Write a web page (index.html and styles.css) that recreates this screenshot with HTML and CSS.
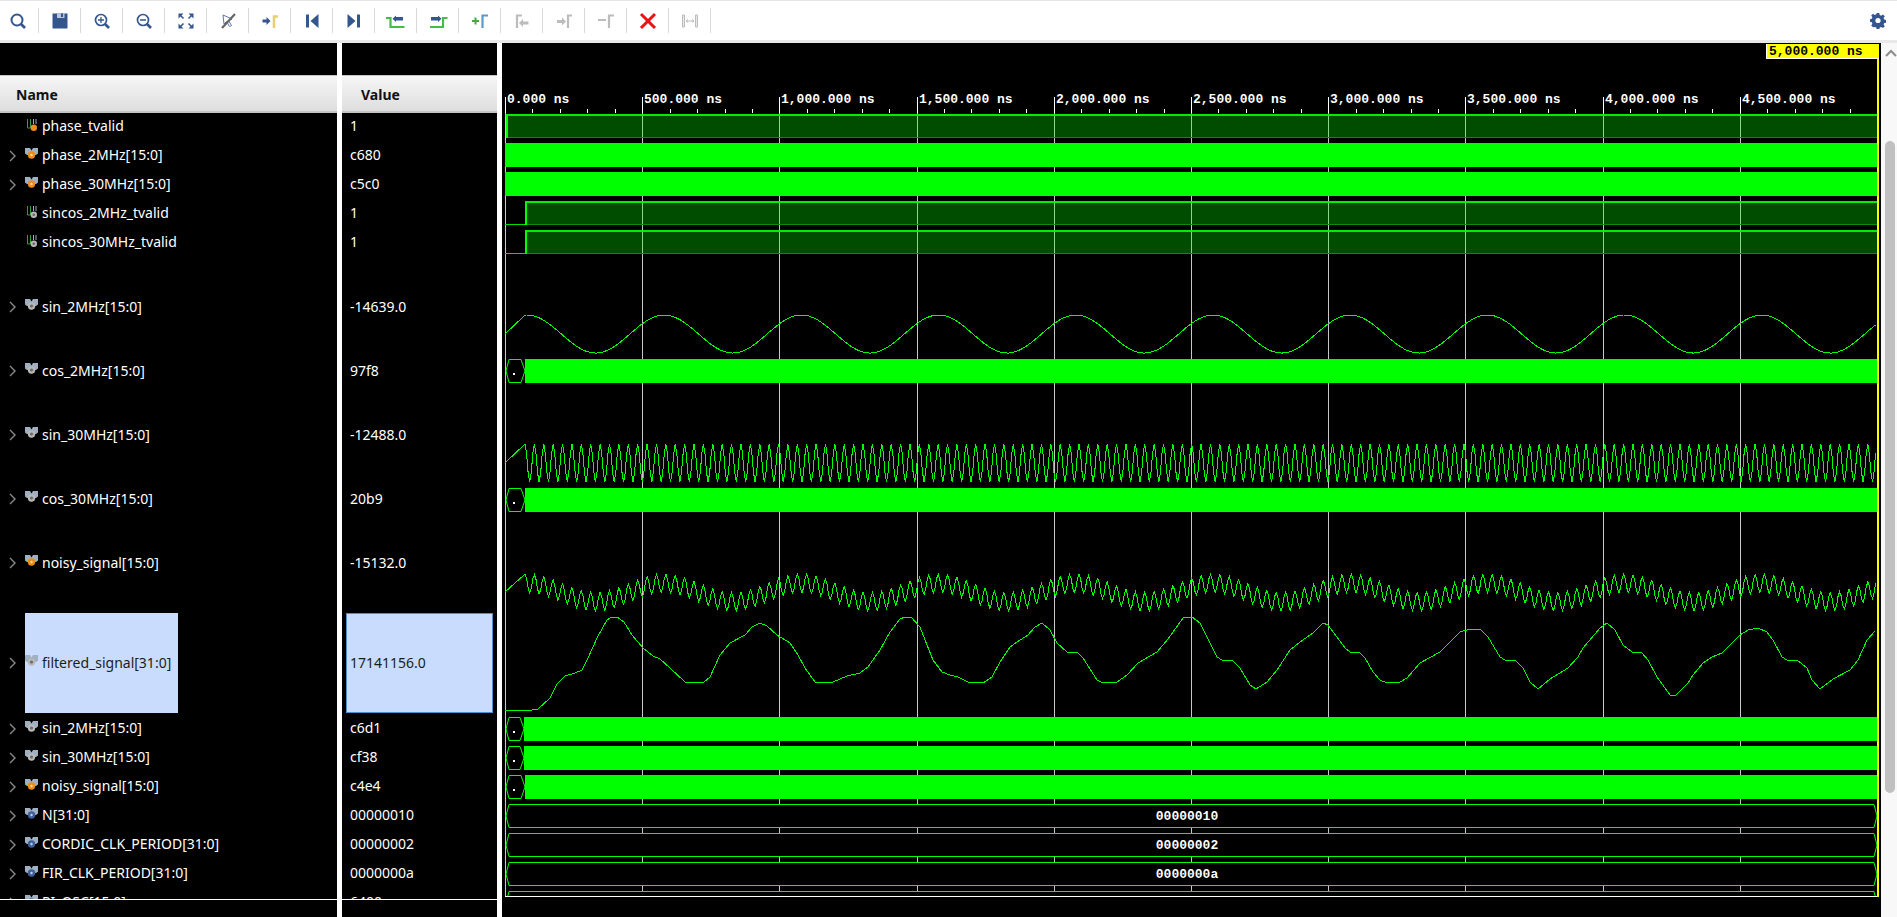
FILE: index.html
```html
<!DOCTYPE html>
<html lang="en">
<head>
    <meta charset="UTF-8">
    <meta name="viewport" content="width=device-width, initial-scale=1.0">
    <title>Waveform Viewer</title>
    <link rel="stylesheet" href="styles.css">
</head>
<body>
    <svg class="defs" width="0" height="0">
        <symbol id="chevron" viewBox="0 0 8 12"><path d="M1 1l5 5-5 5" fill="none" stroke="#8a8a8a" stroke-width="1.4"/></symbol>
        <symbol id="bus-v" viewBox="0 0 13 14"><path d="M0 1h5l1.500 2.500L8 1h5v5.500L11 8H2L0 6.500z" fill="#9fb0c2"/><circle cx="6.500" cy="8" r="3.700" fill="#ee8a1e"/><circle cx="6.500" cy="8" r="1.200" fill="#ffd9a0"/></symbol>
        <symbol id="bus-s" viewBox="0 0 13 14"><path d="M0 1h5l1.500 2.500L8 1h5v5.500L11 8H2L0 6.500z" fill="#9fb0c2"/><circle cx="6.500" cy="8" r="3.700" fill="#b8b8b8"/><circle cx="6.500" cy="8" r="1.600" fill="#6a6a6a"/></symbol>
        <symbol id="bus-c" viewBox="0 0 13 14"><path d="M0 1h5l1.500 2.500L8 1h5v5.500L11 8H2L0 6.500z" fill="#9fb0c2"/><circle cx="6.500" cy="8" r="3.700" fill="#3f5f9c"/><circle cx="6.500" cy="8" r="1.200" fill="#c3d0e6"/></symbol>
        <symbol id="bit-v" viewBox="0 0 13 14"><path d="M2.500 1v9h3V1" fill="none" stroke="#2ea043"/><path d="M8.500 1v5M11 1v5" stroke="#9fb0c2"/><circle cx="8.800" cy="9.800" r="3.200" fill="#ee8a1e"/></symbol>
        <symbol id="bit-s" viewBox="0 0 13 14"><path d="M2.500 1v9h3V1" fill="none" stroke="#2ea043"/><path d="M8.500 1v5M11 1v5" stroke="#9fb0c2"/><circle cx="8.800" cy="9.800" r="3.200" fill="#b8b8b8"/><circle cx="8.800" cy="9.800" r="1.300" fill="#666"/></symbol>
    </svg>

    <div id="toolbar">
        <button class="tool"><svg viewBox="0 0 22 22"><circle cx="10" cy="10" r="5.5" fill="none" stroke="#35558f" stroke-width="2"/><path d="M14 14l4 4" stroke="#35558f" stroke-width="2.6"/></svg></button>
        <button class="tool"><svg viewBox="0 0 22 22"><path d="M3.500 3.500h15v15h-15z" fill="#35558f"/><path d="M8 3.500h7.500v4.500H8z" fill="#b9c6dc"/><path d="M12 3.500h2v3.500h-2z" fill="#35558f"/></svg></button>
        <button class="tool"><svg viewBox="0 0 22 22"><circle cx="10" cy="10" r="5.500" fill="none" stroke="#35558f" stroke-width="1.700"/><path d="M14 14l4 4" stroke="#35558f" stroke-width="2.600"/><path d="M7 10h6M10 7v6" stroke="#35558f" stroke-width="1.300"/></svg></button>
        <button class="tool"><svg viewBox="0 0 22 22"><circle cx="10" cy="10" r="5.500" fill="none" stroke="#35558f" stroke-width="1.700"/><path d="M14 14l4 4" stroke="#35558f" stroke-width="2.600"/><path d="M7 10h6" stroke="#35558f" stroke-width="1.500"/></svg></button>
        <button class="tool"><svg viewBox="0 0 22 22"><path d="M3.500 3.500h5l-5 5zM18.500 3.500h-5l5 5zM3.500 18.500h5l-5-5zM18.500 18.500h-5l5-5z" fill="#35558f"/><path d="M5 5l3.500 3.500M17 5l-3.500 3.500M5 17l3.500-3.500M17 17l-3.500-3.500" stroke="#35558f" stroke-width="1.500"/></svg></button>
        <button class="tool"><svg viewBox="0 0 22 22"><path d="M6 5l9 4-3.500 1.500 3 5-2 1-3-5L7 14z" fill="#fff" stroke="#5a78a8"/><path d="M18 4L5 18" stroke="#666" stroke-width="2.200"/></svg></button>
        <button class="tool"><svg viewBox="0 0 22 22"><path d="M3.500 9.500h4V7l4 4-4 4v-2.500h-4z" fill="#35558f"/><path d="M15 18V6.500h4" fill="none" stroke="#e6cf72" stroke-width="2.600"/></svg></button>
        <button class="tool"><svg viewBox="0 0 22 22"><path d="M5 4.500h3v13H5z" fill="#35558f"/><path d="M17.500 4v14L9.500 11z" fill="#35558f"/></svg></button>
        <button class="tool"><svg viewBox="0 0 22 22"><path d="M14 4.500h3v13h-3z" fill="#35558f"/><path d="M4.500 4v14l8-7z" fill="#35558f"/></svg></button>
        <button class="tool"><svg viewBox="0 0 22 22"><path d="M11 7h7v3.500h-7V12L7.500 8.750 11 5.500z" fill="#35558f"/><path d="M0 8h4.500v9h14" transform="translate(1 0)" fill="none" stroke="#46bd46" stroke-width="2.200"/></svg></button>
        <button class="tool"><svg viewBox="0 0 22 22"><path d="M4 7h7V5.500l3.500 3.250L11 12v-1.500H4z" fill="#35558f"/><path d="M3 17h13V8h4.500" fill="none" stroke="#46bd46" stroke-width="2.200"/></svg></button>
        <button class="tool"><svg viewBox="0 0 22 22"><path d="M3 11h7M6.500 7.500v7" stroke="#46a846" stroke-width="2"/><path d="M13.500 18V5.500H19" fill="none" stroke="#5a9ac8" stroke-width="2.200"/></svg></button>
        <button class="tool"><svg viewBox="0 0 22 22"><path d="M6 18V5.500h5" fill="none" stroke="#bcbcbc" stroke-width="2.200"/><path d="M12 9v2.500h5.500v3H12V17l-4-4z" fill="#bcbcbc"/></svg></button>
        <button class="tool"><svg viewBox="0 0 22 22"><path d="M4 10h5V7.500l4 4-4 4V13H4z" fill="#bcbcbc"/><path d="M15 18V5.500h4" fill="none" stroke="#bcbcbc" stroke-width="2.200"/></svg></button>
        <button class="tool"><svg viewBox="0 0 22 22"><path d="M3 10h8" stroke="#bcbcbc" stroke-width="2"/><path d="M14 18V5.500h5" fill="none" stroke="#bcbcbc" stroke-width="2.200"/></svg></button>
        <button class="tool"><svg viewBox="0 0 22 22"><path d="M4 4l14 14M18 4L4 18" stroke="#ee1111" stroke-width="3"/></svg></button>
        <button class="tool"><svg viewBox="0 0 22 22"><path d="M3.500 5v12h2V5zM18.500 5v12h-2V5z" fill="#e8e8e8" stroke="#bcbcbc"/><path d="M7 11h8M7 11l2-1.500M7 11l2 1.500M15 11l-2-1.500M15 11l-2 1.500" stroke="#bcbcbc" fill="none"/></svg></button>
        <span class="tool-fill"></span>
        <svg class="gear" viewBox="0 0 16 16"><path d="M6.700 0h2.600l.4 2.100 1.500.6 1.800-1.200 1.800 1.800-1.200 1.800.6 1.500 2.100.4v2.600l-2.100.4-.6 1.500 1.200 1.800-1.800 1.800-1.800-1.200-1.500.6-.4 2.100H6.700l-.4-2.100-1.500-.6L3 14.300 1.200 12.500l1.200-1.800-.6-1.500L-.3 8.800V6.200l2.100-.4.6-1.500L1.200 2.500 3 .7l1.800 1.200 1.500-.6z" fill="#35558f"/><circle cx="8" cy="7.500" r="2.600" fill="#fff"/></svg>
    </div>

    <div id="main">
        <div class="col col-name">
            <div class="col-head">Name</div>
            <div class="list">
                <div class="row"><span class="exp"></span><span class="cell"><svg class="sig"><use href="#bit-v"/></svg>phase_tvalid</span></div>
                <div class="row"><svg class="exp"><use href="#chevron"/></svg><span class="cell"><svg class="sig"><use href="#bus-v"/></svg>phase_2MHz[15:0]</span></div>
                <div class="row"><svg class="exp"><use href="#chevron"/></svg><span class="cell"><svg class="sig"><use href="#bus-v"/></svg>phase_30MHz[15:0]</span></div>
                <div class="row"><span class="exp"></span><span class="cell"><svg class="sig"><use href="#bit-s"/></svg>sincos_2MHz_tvalid</span></div>
                <div class="row"><span class="exp"></span><span class="cell"><svg class="sig"><use href="#bit-s"/></svg>sincos_30MHz_tvalid</span></div>
                <div class="row tall after-gap"><svg class="exp"><use href="#chevron"/></svg><span class="cell"><svg class="sig"><use href="#bus-s"/></svg>sin_2MHz[15:0]</span></div>
                <div class="row tall"><svg class="exp"><use href="#chevron"/></svg><span class="cell"><svg class="sig"><use href="#bus-s"/></svg>cos_2MHz[15:0]</span></div>
                <div class="row tall"><svg class="exp"><use href="#chevron"/></svg><span class="cell"><svg class="sig"><use href="#bus-s"/></svg>sin_30MHz[15:0]</span></div>
                <div class="row tall"><svg class="exp"><use href="#chevron"/></svg><span class="cell"><svg class="sig"><use href="#bus-s"/></svg>cos_30MHz[15:0]</span></div>
                <div class="row tall"><svg class="exp"><use href="#chevron"/></svg><span class="cell"><svg class="sig"><use href="#bus-v"/></svg>noisy_signal[15:0]</span></div>
                <div class="row big after-gap"><svg class="exp"><use href="#chevron"/></svg><span class="cell selected"><svg class="sig"><use href="#bus-s"/></svg>filtered_signal[31:0]</span></div>
                <div class="row after-line"><svg class="exp"><use href="#chevron"/></svg><span class="cell"><svg class="sig"><use href="#bus-s"/></svg>sin_2MHz[15:0]</span></div>
                <div class="row"><svg class="exp"><use href="#chevron"/></svg><span class="cell"><svg class="sig"><use href="#bus-s"/></svg>sin_30MHz[15:0]</span></div>
                <div class="row"><svg class="exp"><use href="#chevron"/></svg><span class="cell"><svg class="sig"><use href="#bus-v"/></svg>noisy_signal[15:0]</span></div>
                <div class="row"><svg class="exp"><use href="#chevron"/></svg><span class="cell"><svg class="sig"><use href="#bus-c"/></svg>N[31:0]</span></div>
                <div class="row"><svg class="exp"><use href="#chevron"/></svg><span class="cell"><svg class="sig"><use href="#bus-c"/></svg>CORDIC_CLK_PERIOD[31:0]</span></div>
                <div class="row"><svg class="exp"><use href="#chevron"/></svg><span class="cell"><svg class="sig"><use href="#bus-c"/></svg>FIR_CLK_PERIOD[31:0]</span></div>
                <div class="row"><svg class="exp"><use href="#chevron"/></svg><span class="cell"><svg class="sig"><use href="#bus-c"/></svg>PI_OSC[15:0]</span></div>
            </div>
        </div>

        <div class="col col-value">
            <div class="col-head">Value</div>
            <div class="list">
                <div class="row">1</div>
                <div class="row">c680</div>
                <div class="row">c5c0</div>
                <div class="row">1</div>
                <div class="row">1</div>
                <div class="row tall after-gap">-14639.0</div>
                <div class="row tall">97f8</div>
                <div class="row tall">-12488.0</div>
                <div class="row tall">20b9</div>
                <div class="row tall">-15132.0</div>
                <div class="row big after-gap"><span class="value-selected">17141156.0</span></div>
                <div class="row after-line">c6d1</div>
                <div class="row">cf38</div>
                <div class="row">c4e4</div>
                <div class="row">00000010</div>
                <div class="row">00000002</div>
                <div class="row">0000000a</div>
                <div class="row">6400</div>
            </div>
        </div>

        <svg id="wave" viewBox="502 43 1379 874" width="1379" height="874"></svg>

        <div id="scroll">
            <svg class="scroll-up" viewBox="0 0 12 8"><path d="M1 7l5-5 5 5" fill="none" stroke="#8c8c8c" stroke-width="2"/></svg>
            <div class="thumb"></div>
        </div>
    </div>

    <script src="waves.js"></script>
</body>
</html>
```

FILE: styles.css
```css
body {
    font-family: "Noto Sans", Arial, sans-serif;
    font-size: 14px;
    background-color: #000;
    margin: 0;
    padding: 0;
    overflow: hidden;
}

.defs {
    position: absolute;
}

#toolbar {
    display: flex;
    align-items: center;
    height: 39px;
    background-color: #fff;
    border-top: 1px solid #e4e4e4;
    border-bottom: 3px solid #e8e8e8;
}

.tool {
    display: flex;
    align-items: center;
    justify-content: center;
    width: 42px;
    height: 25px;
    padding: 0;
    background: none;
    border: none;
    border-right: 1px solid #d8d8d8;
}

.tool:first-child {
    width: 39px;
    padding-right: 2px;
}

.tool svg {
    width: 22px;
    height: 22px;
}

.tool-fill {
    flex: 1;
}

.gear {
    width: 16px;
    height: 16px;
    margin-right: 11px;
}

#main {
    display: flex;
    height: 874px;
}

.col {
    flex: none;
    padding-top: 32px;
    border-right: 5px solid #fff;
}

.col-name {
    width: 337px;
}

.col-value {
    width: 155px;
}

.col-head {
    height: 35px;
    line-height: 37px;
    font-weight: bold;
    color: #111;
    background: linear-gradient(#f6f6f6, #dedede);
    border-top: 1px solid #c4c4c4;
    border-bottom: 1px solid #c4c4c4;
    box-shadow: 0 1px 0 #c4c4c4;
    padding-left: 16px;
}

.col-value .col-head {
    padding-left: 19px;
}

.list {
    height: 787px;
    overflow: hidden;
    border-bottom: 1px solid #fff;
    color: #fff;
}

.row {
    display: flex;
    align-items: center;
    height: 29px;
    white-space: nowrap;
    box-sizing: border-box;
}

.col-name .row {
    padding-left: 9px;
}

.col-value .row {
    padding-left: 8px;
    padding-bottom: 2px;
}

.row.tall {
    height: 64px;
}

.row.big {
    height: 100px;
}

.row.after-gap {
    margin-top: 18px;
}

.row.after-line {
    margin-top: 1px;
}

.exp {
    flex: none;
    width: 8px;
    height: 12px;
    margin-right: 8px;
}

span.exp {
    display: block;
}

.cell {
    display: flex;
    align-items: center;
    align-self: stretch;
    padding-right: 7px;
    padding-bottom: 2px;
    box-sizing: border-box;
}

.cell.selected,
.value-selected {
    background-color: #c9dcfd;
    color: #1c1c1c;
}

.sig {
    flex: none;
    width: 13px;
    height: 14px;
    margin: -2px 4px 0 0;
}

.col-value .row.big {
    padding: 0 4px;
}

.value-selected {
    display: flex;
    align-items: center;
    flex: 1;
    align-self: stretch;
    padding-left: 3px;
    padding-bottom: 2px;
    border: 1px solid #4a90d0;
}

#wave {
    display: block;
    flex: none;
    background-color: #000;
}

#scroll {
    flex: 1;
    background-color: #f8f8f8;
    padding: 6px 0 0 4px;
}

.scroll-up {
    display: block;
    width: 12px;
    height: 8px;
}

.thumb {
    width: 10px;
    height: 652px;
    margin-top: 84px;
    background-color: #c0c0c0;
    border-radius: 5px;
}
```

FILE: waves.js
```js
// Draws the waveform pane, all coordinates are page pixels
const X0 = 505, XEND = 1877, BOTTOM = 896, TIME_STEP = 137.2, FAST_PERIOD = 9.39;
const GREEN = "#00ff00";
const RULER_FONT = 'font-family="Liberation Mono" font-weight="bold" font-size="13"';

// traced from the filtered output, [x, y]
const FILTERED = [[505,710],[532,710],[538,709],[550,698],[557,684],[565,676],[575,673],[582,670],[588,658],[597,638],[607,620],[612,617],[617,617],[624,622],[632,635],[643,648],[653,656],[660,659],[670,668],[685,682],[697,682],[703,683],[710,677],[720,655],[730,643],[745,635],[752,627],[760,623],[767,626],[777,635],[790,643],[798,655],[805,668],[815,682],[822,683],[833,682],[847,676],[860,673],[868,667],[880,650],[890,632],[900,619],[905,617],[911,617],[920,627],[925,640],[933,660],[942,672],[950,675],[958,677],[968,682],[983,683],[992,677],[1000,662],[1010,647],[1017,642],[1028,635],[1035,627],[1042,623],[1050,630],[1057,643],[1067,652],[1078,653],[1083,658],[1097,680],[1103,683],[1117,682],[1127,675],[1138,663],[1157,652],[1168,639],[1183,618],[1192,617],[1200,623],[1217,657],[1222,660],[1232,660],[1240,668],[1250,685],[1256,689],[1267,682],[1277,670],[1290,650],[1300,642],[1313,633],[1323,623],[1328,625],[1337,637],[1345,648],[1350,652],[1360,653],[1365,658],[1373,672],[1380,680],[1387,683],[1400,682],[1407,678],[1420,663],[1440,652],[1460,632],[1470,629],[1480,629],[1488,637],[1500,657],[1505,660],[1515,660],[1523,668],[1530,682],[1538,689],[1550,679],[1568,668],[1578,657],[1583,648],[1600,628],[1607,623],[1615,630],[1623,645],[1632,652],[1642,653],[1648,660],[1657,677],[1670,695],[1676,695],[1688,683],[1693,675],[1703,663],[1712,657],[1722,653],[1740,635],[1748,630],[1758,628],[1767,632],[1773,640],[1782,657],[1787,660],[1797,660],[1807,668],[1812,680],[1820,689],[1833,679],[1850,670],[1858,660],[1867,640],[1875,631]];

function slow(x) {
    return Math.cos(2 * Math.PI * (x - 527) / TIME_STEP);
}

function fast(x) {
    return Math.cos(2 * Math.PI * (x - 525) / FAST_PERIOD);
}

// samples a function in step with the fast sine, after the start ramp
function sampled(startY, fn) {
    const pts = [[505, startY]];
    for (let x = 525; x <= XEND; x += FAST_PERIOD / 6) {
        pts.push([x, fn(x)]);
    }
    return pts;
}

function polyline(pts) {
    const str = pts.map(p => p[0].toFixed(1) + "," + p[1].toFixed(1)).join(" ");
    return `<polyline points="${str}" fill="none" stroke="${GREEN}" stroke-width="1"/>`;
}

function ruler() {
    let out = "";
    for (let i = 0; i < 10; i++) {
        const x = Math.round(X0 + i * TIME_STEP) + 0.5;
        out += `<path d="M${x} 97V113" stroke="#fff"/>`;
        out += `<path d="M${x} 113V${BOTTOM}" stroke="#c8c8c8"/>`;
        const label = (i * 500).toLocaleString("en-US") + ".000 ns";
        out += `<text x="${x + 1.5}" y="103" fill="#fff" ${RULER_FONT}>${label}</text>`;
        for (let j = 1; j < 5; j++) {
            const tx = Math.round(X0 + (i + j / 5) * TIME_STEP) + 0.5;
            if (tx < XEND) out += `<path d="M${tx} 109V113" stroke="#fff"/>`;
        }
    }
    return out;
}

// single bit high, drawn as a dark box over the grid
function highBox(top, riseX) {
    const bottom = top + 23;
    let out = `<rect x="${riseX}" y="${top}" width="${XEND - riseX}" height="24" fill="${GREEN}" fill-opacity="0.3"/>`;
    out += `<path d="M${riseX} ${bottom + 0.5}H${XEND}" stroke="#0c8a0c"/>`;
    out += `<path d="M${riseX} ${top + 1}H${XEND}" stroke="${GREEN}" stroke-opacity="0.9" stroke-width="2"/>`;
    out += `<path d="M${riseX + 1} ${top}V${bottom + 1}" stroke="${GREEN}" stroke-width="2"/>`;
    if (riseX > 510) out += `<path d="M505 ${bottom + 0.5}H${riseX}" stroke="#00e000"/>`;
    return out;
}

function solid(top, fromX) {
    return `<rect x="${fromX}" y="${top}" width="${XEND - fromX}" height="24" fill="${GREEN}"/>`;
}

function hexDot(top, toX) {
    const mid = top + 12, bot = top + 23.5, t = top + 0.5;
    return `<polygon points="506,${mid} 509,${t} ${toX - 4},${t} ${toX},${mid} ${toX - 4},${bot} 509,${bot}" fill="none" stroke="${GREEN}"/>` +
        `<rect x="513" y="${top + 14}" width="2" height="2" fill="#fff"/>`;
}

function constBox(top, text) {
    const mid = top + 12, bot = top + 23.5, t = top + 0.5;
    let out = `<polygon points="506,${mid} 509,${t} 1874,${t} 1877,${mid} 1874,${bot} 509,${bot}" fill="#000" stroke="${GREEN}"/>`;
    if (text) out += `<text x="1187" y="${mid + 4}" text-anchor="middle" fill="#fff" ${RULER_FONT}>${text}</text>`;
    return out;
}

function drawWaves() {
    let out = ruler();

    out += highBox(114, 506);
    out += solid(143, 505);
    out += solid(172, 505);
    out += highBox(201, 525);
    out += highBox(230, 525);

    out += `<g shape-rendering="crispEdges">`;
    out += polyline(sampled(334, x => 334 - 19 * slow(x)));
    out += polyline(sampled(463, x => 463 - 19 * fast(x)));
    out += polyline(sampled(592, x => 592.5 - 9.2 * slow(x) - 9.2 * fast(x)));
    out += polyline(FILTERED);
    out += `</g>`;

    // value rows, hex bubble then too many transitions to draw
    [[359, 525], [488, 525], [717, 524], [746, 524], [775, 525]].forEach(r => {
        out += hexDot(r[0], r[1]);
        out += solid(r[0], r[1]);
    });

    out += constBox(804, "00000010");
    out += constBox(833, "00000002");
    out += constBox(862, "0000000a");
    out += constBox(891, "");
    out += `<rect x="502" y="${BOTTOM}" width="1379" height="21" fill="#000"/>`;
    out += `<path d="M505 ${BOTTOM + 0.5}H1879" stroke="#fff"/>`;

    // cursor and its flag
    out += `<rect x="1877" y="44" width="2" height="853" fill="#ffff00"/>`;
    out += `<rect x="1766" y="44" width="113" height="15" fill="#fff"/>`;
    out += `<rect x="1767" y="44" width="112" height="14" fill="#ffff00"/>`;
    out += `<text x="1769" y="55" fill="#000" ${RULER_FONT}>5,000.000 ns</text>`;

    document.getElementById("wave").innerHTML = out;
}

drawWaves();
```
